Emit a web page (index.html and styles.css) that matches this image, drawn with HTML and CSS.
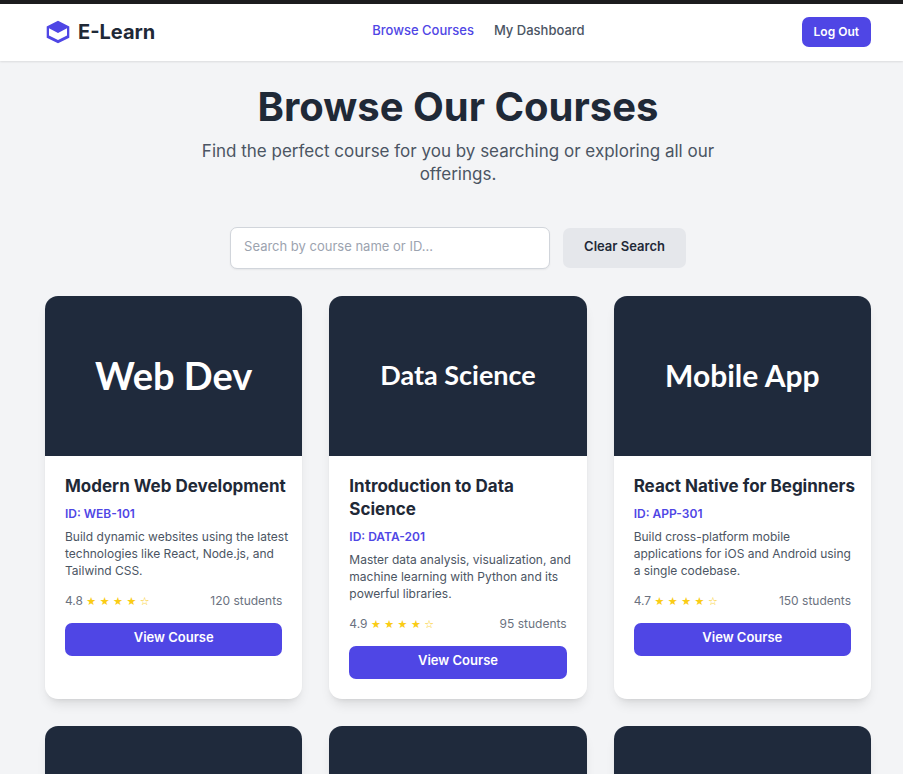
FILE: index.html
```html
<!DOCTYPE html>
<html lang="en">
<head>
<meta charset="utf-8">
<meta name="viewport" content="width=device-width, initial-scale=1">
<title>E-Learn</title>
<link rel="stylesheet" href="styles.css">
</head>
<body>
<header class="header">
  <a class="brand" href="#">
    <svg class="logo" viewBox="0 0 24 24" aria-hidden="true">
      <path fill="#4f46e5" fill-rule="evenodd" d="M12 .8 23.3 6.5V17.7L12 23.3.7 17.7V6.5ZM3 8.3V15.5L12 20 21 15.5V8.3L12 13Z"/>
    </svg>
    <span>E-Learn</span>
  </a>
  <nav class="nav">
    <a class="active" href="#">Browse Courses</a>
    <a href="#">My Dashboard</a>
  </nav>
  <button class="logout" type="button">Log Out</button>
</header>
<main class="main">
  <section class="intro">
    <h1>Browse Our Courses</h1>
    <p>Find the perfect course for you by searching or exploring all our offerings.</p>
  </section>
  <form class="search">
    <input type="text" aria-label="Search courses" placeholder="Search by course name or ID...">
    <button type="reset">Clear Search</button>
  </form>
  <section class="grid">
    <article class="card">
      <div class="cover cover-large">Web Dev</div>
      <div class="body">
        <h2>Modern Web Development</h2>
        <p class="code">ID: WEB-101</p>
        <p class="text">Build dynamic websites using the latest technologies like React, Node.js, and Tailwind CSS.</p>
        <div class="meta"><span>4.8 <span class="stars">★ ★ ★ ★ ☆</span></span><span>120 students</span></div>
        <button class="view" type="button">View Course</button>
      </div>
    </article>
    <article class="card">
      <div class="cover cover-small">Data Science</div>
      <div class="body">
        <h2>Introduction to Data Science</h2>
        <p class="code">ID: DATA-201</p>
        <p class="text">Master data analysis, visualization, and machine learning with Python and its powerful libraries.</p>
        <div class="meta"><span>4.9 <span class="stars">★ ★ ★ ★ ☆</span></span><span>95 students</span></div>
        <button class="view" type="button">View Course</button>
      </div>
    </article>
    <article class="card">
      <div class="cover cover-medium">Mobile App</div>
      <div class="body">
        <h2>React Native for Beginners</h2>
        <p class="code">ID: APP-301</p>
        <p class="text">Build cross-platform mobile applications for iOS and Android using a single codebase.</p>
        <div class="meta"><span>4.7 <span class="stars">★ ★ ★ ★ ☆</span></span><span>150 students</span></div>
        <button class="view" type="button">View Course</button>
      </div>
    </article>
    <article class="card"><div class="cover"></div></article>
    <article class="card"><div class="cover"></div></article>
    <article class="card"><div class="cover"></div></article>
  </section>
</main>
</body>
</html>
```
FILE: styles.css
```css
* { box-sizing: border-box; }

html { scrollbar-width: none; }

body {
  margin: 0;
  background: #f3f4f6;
  color: #1f2937;
  font-family: Inter, "Liberation Sans", sans-serif;
  font-size: 13px;
}

h1, h2, p { margin: 0; }
a { color: inherit; text-decoration: none; }

button {
  border: 0;
  border-radius: 7px;
  font-family: inherit;
  font-weight: 600;
}

.header {
  display: flex;
  justify-content: space-between;
  align-items: center;
  padding: 13px 32px 14px 45px;
  background: #fff;
  border-top: 4px solid #1c1c1e;
  box-shadow: 0 1px 2px rgba(0, 0, 0, 0.1);
}

.brand {
  display: flex;
  align-items: center;
  gap: 7px;
  font-size: 20px;
  line-height: 26px;
  font-weight: 700;
}

.logo { width: 26px; height: 26px; padding: 1px; }

.nav {
  display: flex;
  gap: 20px;
  padding-bottom: 4px;
  color: #4b5563;
  font-weight: 500;
  line-height: 20px;
}

.nav .active { color: #4f46e5; }

.logout {
  padding: 7px 12px;
  background: #4f46e5;
  color: #fff;
  font-size: 12px;
  line-height: 16px;
}

.main { padding: 26px 32px 26px 45px; }

.intro {
  max-width: 560px;
  margin: 0 auto;
  text-align: center;
}

.intro h1 {
  font-size: 40px;
  line-height: 40px;
  font-weight: 700;
}

.intro p {
  margin-top: 13px;
  color: #4b5563;
  font-size: 17px;
  line-height: 23px;
}

.search {
  display: flex;
  justify-content: center;
  align-items: center;
  gap: 13px;
  margin: 41px 0 27px;
}

.search input {
  width: 320px;
  height: 42px;
  padding: 0 13px 4px;
  border: 1px solid #d1d5db;
  border-radius: 7px;
  background: #fff;
  box-shadow: 0 1px 2px rgba(0, 0, 0, 0.06);
  color: inherit;
  font-family: inherit;
  font-size: 13px;
}

.search input::placeholder { color: #9ca3af; }

.search button {
  height: 40px;
  padding: 0 21px 4px;
  background: #e5e7eb;
  color: #1f2937;
  font-size: 13px;
}

.grid {
  display: grid;
  grid-template-columns: repeat(3, 1fr);
  gap: 27px;
}

.card {
  overflow: hidden;
  border-radius: 13px;
  background: #fff;
  box-shadow: 0 8px 12px -3px rgba(0, 0, 0, 0.1), 0 3px 5px -3px rgba(0, 0, 0, 0.1);
}

.cover {
  display: flex;
  justify-content: center;
  align-items: center;
  height: 160px;
  padding-bottom: 3px;
  background: #1f2a3c;
  color: #fff;
  font-family: Lato, sans-serif;
  font-weight: 700;
}

.cover-large { font-size: 38px; }
.cover-medium { font-size: 30px; }
.cover-small { font-size: 27px; }

/* Headings and descriptions run slightly wider than the controls below them. */
.body { padding: 19px 12px 20px 20px; }
.meta, .view { width: calc(100% - 8px); }

.body h2 {
  font-size: 17px;
  line-height: 23px;
  font-weight: 700;
}

.code {
  margin-top: 7px;
  color: #4f46e5;
  font-size: 12px;
  line-height: 17px;
  font-weight: 600;
}

.text {
  margin-top: 6px;
  color: #4b5563;
  font-size: 12px;
  line-height: 17px;
}

.meta {
  display: flex;
  justify-content: space-between;
  height: 17px;
  margin: 13px 0 14px;
  color: #6b7280;
  font-size: 12px;
  line-height: 17px;
}

.stars {
  color: #facc15;
  font-family: "DejaVu Sans", sans-serif;
  font-size: 11px;
}

.view {
  display: block;
  padding: 4px 13px 9px;
  background: #4f46e5;
  color: #fff;
  font-size: 13px;
  line-height: 20px;
}
```
